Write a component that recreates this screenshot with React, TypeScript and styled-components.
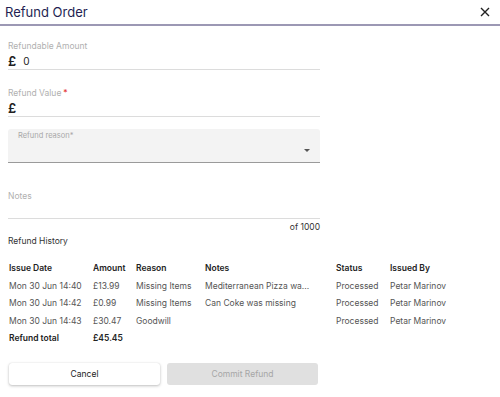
import React from 'react';
import styled, { createGlobalStyle } from 'styled-components';

const GlobalStyle = createGlobalStyle`
  body {
    margin: 0;
    background: #ffffff;
    font-family: 'Inter', 'Noto Sans', sans-serif;
  }
`;

const Dialog = styled.div`
  width: 500px;
  height: 397px;
  background: #fff;
`;

const Header = styled.div`
  height: 24px;
  display: flex;
  align-items: center;
  justify-content: space-between;
  padding: 0 8px 0 5px;
  border-bottom: 2px solid #9c98b4;
`;

const Title = styled.h2`
  margin: 0;
  font-size: 13px;
  font-weight: 400;
  color: #241f52;
`;

const CloseButton = styled.button`
  border: none;
  background: none;
  padding: 0;
  width: 14px;
  height: 14px;
  display: flex;
  align-items: center;
  justify-content: center;
  cursor: pointer;
`;

const Body = styled.div`
  padding: 14px 8px 0 8px;
`;

const Form = styled.div`
  width: 312px;
  display: flex;
  flex-direction: column;
`;

const Field = styled.div<{ $top?: number }>`
  margin-top: ${(p) => p.$top ?? 0}px;
  border-bottom: 1px solid #dcdcdc;
`;

const Label = styled.div`
  font-size: 8.5px;
  line-height: 12px;
  color: #b0b0b0;
`;

const Required = styled.span`
  color: #e53935;
  margin-left: 2px;
`;

const ValueRow = styled.div`
  height: 17px;
  display: flex;
  align-items: center;
  gap: 7px;
  color: #222;
`;

const Pound = styled.span`
  font-size: 13px;
  font-weight: 600;
`;

const Amount = styled.span`
  font-size: 10px;
`;

const Select = styled.div`
  margin-top: 12px;
  height: 33px;
  background: #f3f3f3;
  border-bottom: 1px solid #9a9a9a;
  border-radius: 3px 3px 0 0;
  padding: 0 10px;
  display: flex;
  flex-direction: column;
`;

const SelectLabel = styled.div`
  font-size: 7.5px;
  color: #a8a8a8;
  margin-top: 2px;
`;

const SelectArrow = styled.div`
  margin-left: auto;
  margin-top: 9px;
  width: 0;
  height: 0;
  border-left: 3px solid transparent;
  border-right: 3px solid transparent;
  border-top: 3px solid #555;
`;

const NotesField = styled.div`
  margin-top: 27px;
  height: 28px;
  border-bottom: 1px solid #dcdcdc;
`;

const Counter = styled.div`
  text-align: right;
  font-size: 8.5px;
  line-height: 12px;
  margin-top: 2px;
  color: #333;
`;

const SectionTitle = styled.div`
  font-size: 8.5px;
  line-height: 12px;
  margin-top: 2px;
  color: #333;
`;

const Table = styled.div`
  margin-top: 16px;
  display: grid;
  grid-template-columns: 84px 43px 69px 131px 54px 1fr;
  row-gap: 6px;
  padding-left: 1px;
  font-size: 8.5px;
  line-height: 11.5px;
  color: #555;
`;

const HeadCell = styled.div`
  font-weight: 600;
  color: #222;
`;

const Cell = styled.div<{ $bold?: boolean }>`
  font-weight: ${(p) => (p.$bold ? 600 : 400)};
  color: ${(p) => (p.$bold ? '#222' : '#555')};
  white-space: nowrap;
`;

const Actions = styled.div`
  margin-top: 18px;
  display: flex;
  gap: 7px;
  padding-left: 1px;
`;

const Button = styled.button<{ $disabled?: boolean }>`
  width: 151px;
  height: 22px;
  border: none;
  border-radius: 3px;
  font-family: inherit;
  font-size: 8.5px;
  background: ${(p) => (p.$disabled ? '#e0e0e0' : '#ffffff')};
  color: ${(p) => (p.$disabled ? '#a6a6a6' : '#222')};
  box-shadow: ${(p) =>
    p.$disabled ? 'none' : '0 1px 3px rgba(0,0,0,0.25), 0 0 1px rgba(0,0,0,0.15)'};
`;

const history = [
  { date: 'Mon 30 Jun 14:40', amount: '£13.99', reason: 'Missing Items', notes: 'Mediterranean Pizza wa...', status: 'Processed', by: 'Petar Marinov' },
  { date: 'Mon 30 Jun 14:42', amount: '£0.99', reason: 'Missing Items', notes: 'Can Coke was missing', status: 'Processed', by: 'Petar Marinov' },
  { date: 'Mon 30 Jun 14:43', amount: '£30.47', reason: 'Goodwill', notes: '', status: 'Processed', by: 'Petar Marinov' },
];

const App: React.FC = () => {
  return (
    <Dialog>
      <GlobalStyle />
      <Header>
        <Title>Refund Order</Title>
        <CloseButton>
          <svg width="10" height="10" viewBox="0 0 10 10">
            <path d="M1 1L9 9M9 1L1 9" stroke="#222" strokeWidth="1.4" />
          </svg>
        </CloseButton>
      </Header>
      <Body>
        <Form>
          <Field>
            <Label>Refundable Amount</Label>
            <ValueRow>
              <Pound>£</Pound>
              <Amount>0</Amount>
            </ValueRow>
          </Field>
          <Field $top={17}>
            <Label>
              Refund Value<Required>*</Required>
            </Label>
            <ValueRow>
              <Pound>£</Pound>
            </ValueRow>
          </Field>
          <Select>
            <SelectLabel>Refund reason*</SelectLabel>
            <SelectArrow />
          </Select>
          <NotesField>
            <Label>Notes</Label>
          </NotesField>
          <Counter>of 1000</Counter>
          <SectionTitle>Refund History</SectionTitle>
        </Form>
        <Table>
          <HeadCell>Issue Date</HeadCell>
          <HeadCell>Amount</HeadCell>
          <HeadCell>Reason</HeadCell>
          <HeadCell>Notes</HeadCell>
          <HeadCell>Status</HeadCell>
          <HeadCell>Issued By</HeadCell>
          {history.map((row) => (
            <React.Fragment key={row.date}>
              <Cell>{row.date}</Cell>
              <Cell>{row.amount}</Cell>
              <Cell>{row.reason}</Cell>
              <Cell>{row.notes}</Cell>
              <Cell>{row.status}</Cell>
              <Cell>{row.by}</Cell>
            </React.Fragment>
          ))}
          <Cell $bold>Refund total</Cell>
          <Cell $bold>£45.45</Cell>
        </Table>
        <Actions>
          <Button>Cancel</Button>
          <Button $disabled>Commit Refund</Button>
        </Actions>
      </Body>
    </Dialog>
  );
};

export default App;
